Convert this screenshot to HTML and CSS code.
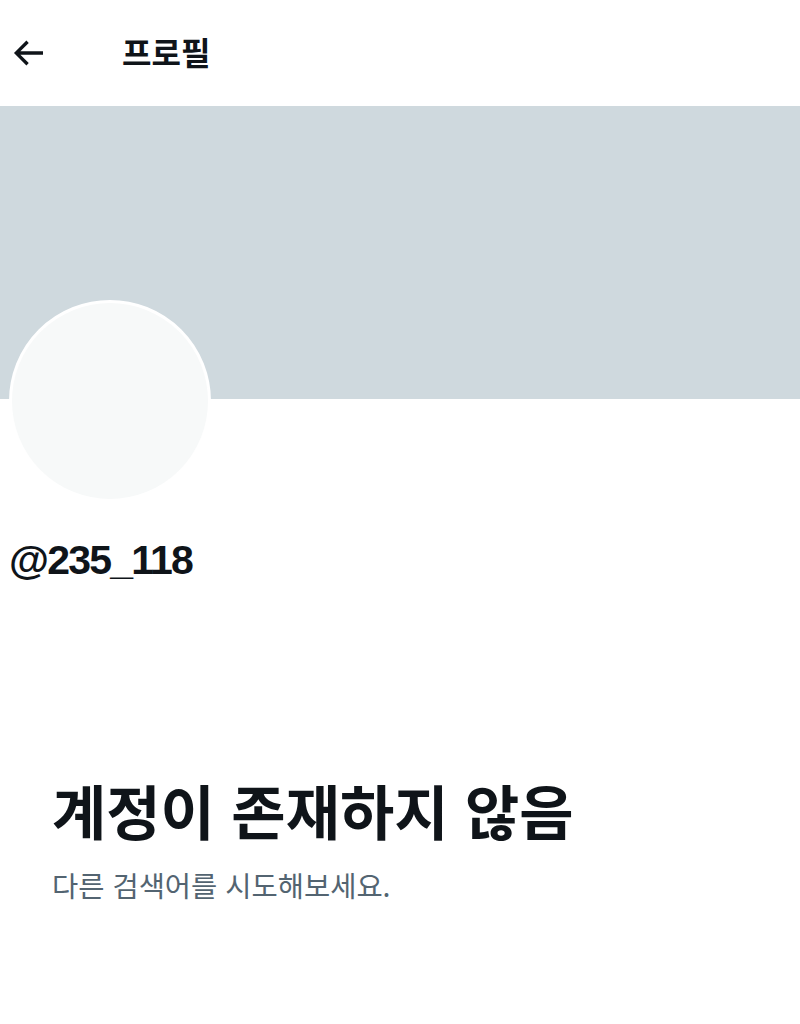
FILE: index.html
```html
<!DOCTYPE html>
<html lang="ko">
<head>
    <meta charset="UTF-8">
    <meta name="viewport" content="width=device-width, initial-scale=1.0">
    <title>프로필</title>
    <link rel="stylesheet" href="styles.css">
</head>
<body>

<header class="topbar">
    <button class="back" aria-label="뒤로">
        <svg viewBox="0 0 24 24" width="40" height="40">
            <path d="M7.414 13l5.043 5.04-1.414 1.42L3.586 12l7.457-7.46 1.414 1.42L7.414 11H21v2H7.414z"/>
        </svg>
    </button>
    <h1>프로필</h1>
</header>

<div class="banner"></div>

<section class="profile">
    <div class="avatar"></div>
    <div class="handle">@235_118</div>
</section>

<section class="empty">
    <h2>계정이 존재하지 않음</h2>
    <p>다른 검색어를 시도해보세요.</p>
</section>

</body>
</html>
```

FILE: styles.css
```css
body {
    margin: 0;
    background-color: #ffffff;
    color: #0f1419;
    font-family: "Noto Sans CJK KR", "Noto Sans", sans-serif;
}
.topbar {
    height: 106px;
    display: flex;
    align-items: center;
    padding: 0 0 0 8px;
    box-sizing: border-box;
}
.back {
    border: 0;
    background: none;
    padding: 0;
    width: 40px;
    height: 40px;
    display: flex;
    margin-top: -1px;
}
.back svg {
    fill: #0f1419;
}
.topbar h1 {
    margin: -4px 0 0 74px;
    font-size: 32px;
    font-weight: 700;
}
.banner {
    height: 293px;
    background-color: #cfd9de;
}
.profile {
    padding: 0 9px;
}
.avatar {
    width: 196px;
    height: 196px;
    margin-top: -99px;
    border-radius: 50%;
    background-color: #f7f9f9;
    border: 3px solid #ffffff;
}
.handle {
    margin-top: 34px;
    font-family: "Liberation Sans", Arial, sans-serif;
    font-size: 41px;
    font-weight: 700;
    letter-spacing: -1.8px;
    line-height: 48px;
}
.empty {
    padding: 0 52px;
    margin-top: 190px;
}
.empty h2 {
    margin: 0;
    font-size: 59px;
    font-weight: 700;
    line-height: 72px;
}
.empty p {
    margin: 18px 0 0;
    font-size: 28.5px;
    color: #536471;
}
```
